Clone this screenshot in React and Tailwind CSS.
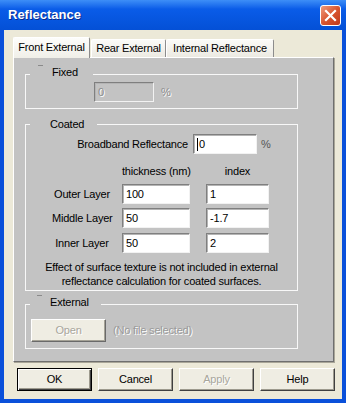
import React from "react";

function TextBox({ value, className, disabled, caret }) {
  return (
    <div
      className={`h-[20px] flex items-center pl-[3px] border border-t-[#7f7f7f] border-l-[#7f7f7f] border-r-[#f2f2f2] border-b-[#f2f2f2] shadow-[inset_1px_1px_0_#b4b4b4] ${
        disabled ? "bg-[#c3c3c3] text-[#8c8c8c] [text-shadow:1px_1px_0_#ffffff]" : "bg-white"
      } ${className}`}
    >
      {caret && <span className="w-px h-[13px] bg-black mr-px" />}
      {value}
    </div>
  );
}

function DlgButton({ children, isDefault, disabled }) {
  return (
    <button
      className={`w-[75px] h-[23px] flex items-center justify-center bg-[#efede3] ${
        isDefault
          ? "border border-black shadow-[inset_1px_1px_0_#ffffff,inset_-1px_-1px_0_#404040,inset_-2px_-2px_0_#9d9a8e]"
          : "border border-t-white border-l-white border-r-[#404040] border-b-[#404040] shadow-[inset_-1px_-1px_0_#9d9a8e]"
      } ${disabled ? "text-[#a8a69c] [text-shadow:1px_1px_0_#ffffff]" : "text-black"}`}
    >
      {children}
    </button>
  );
}

function Legend({ width, dashLeft, textCls, children }) {
  return (
    <legend className={`ml-[4px] ${width} h-[13px] leading-[13px]`}>
      <div className="flex items-center h-[13px]">
        {dashLeft && (
          <span className={`${dashLeft} w-[5px] h-px bg-[#8a8a8a] relative -top-[9px]`} />
        )}
        <span className={textCls}>{children}</span>
      </div>
    </legend>
  );
}

const layers = [
  { name: "Outer Layer", thick: "100", index: "1", top: "mt-[6px]" },
  { name: "Middle Layer", thick: "50", index: "-1.7", top: "mt-[4px]" },
  { name: "Inner Layer", thick: "50", index: "2", top: "mt-[5px]" },
];

export default function App() {
  return (
    <div className="w-[346px] h-[403px] bg-[#0a50da] flex flex-col overflow-hidden text-[11px] tracking-[-0.2px] text-black [font-family:'Liberation_Sans',Arial,sans-serif]">
      {/* Title bar */}
      <div className="h-[30px] shrink-0 flex items-center pl-[8px] pr-[5px] bg-linear-to-b from-[#3d8ef7] via-[#0a5ce8] via-30% to-[#0450d6]">
        <span className="text-white font-bold text-[13px] tracking-normal [text-shadow:1px_1px_0_#0a2a8a]">
          Reflectance
        </span>
        <button className="ml-auto w-[21px] h-[21px] rounded-[3px] border border-white bg-linear-to-br from-[#ee9a7c] via-[#d9552f] to-[#c0391a] flex items-center justify-center">
          <svg width="13" height="13" viewBox="0 0 13 13">
            <path d="M2 2L11 11M11 2L2 11" stroke="white" strokeWidth="2.2" strokeLinecap="square" />
          </svg>
        </button>
      </div>

      {/* Client area */}
      <div className="flex-1 mx-[4px] mb-[4px] bg-[#ece9d8] flex flex-col">
        {/* Tabs */}
        <div className="h-[27px] pt-[7px] pl-[9px] flex items-end">
          <div className="relative z-10 -mb-px w-[77px] h-[21px] pb-px flex items-center justify-center bg-linear-to-b from-[#fdfdfb] to-[#f0efe8] border border-b-0 border-t-white border-l-white border-r-[#8c8c8c] rounded-t-[2px]">
            Front External
          </div>
          <div className="ml-px w-[75px] h-[18px] flex items-center justify-center bg-linear-to-b from-[#fbfbf8] to-[#eceae2] border border-b-0 border-t-white border-l-white border-r-[#8c8c8c] rounded-t-[2px]">
            Rear External
          </div>
          <div className="w-[108px] h-[18px] flex items-center justify-center bg-linear-to-b from-[#fbfbf8] to-[#eceae2] border border-b-0 border-t-white border-l-white border-r-[#8c8c8c] rounded-t-[2px]">
            Internal Reflectance
          </div>
        </div>

        {/* Tab panel */}
        <div className="ml-[9px] w-[321px] h-[305px] pt-[10px] bg-[#c3c3c3] border border-t-white border-l-white border-r-[#6f6f6f] border-b-[#6f6f6f] shadow-[1px_1px_0_#a9a698]">
          {/* Fixed */}
          <fieldset className="ml-[11px] w-[273px] border border-[#f8f8f8] pb-[6px]">
            <Legend width="w-[63px]" dashLeft="ml-[8px]" textCls="ml-[9px] relative -top-[2px]">
              Fixed
            </Legend>
            <div className="mt-px ml-[68px] flex items-center">
              <TextBox className="w-[60px]" value="0" disabled />
              <span className="ml-[7px] text-[#8c8c8c] [text-shadow:1px_1px_0_#ffffff]">%</span>
            </div>
          </fieldset>

          {/* Coated */}
          <fieldset className="mt-[9px] ml-[11px] w-[273px] border border-[#f8f8f8] pb-[2px]">
            <Legend width="w-[67px]" textCls="ml-[20px]">
              Coated
            </Legend>
            <div className="mt-[3px] flex items-center">
              <span className="w-[162px] text-right whitespace-nowrap">Broadband Reflectance</span>
              <TextBox className="ml-[5px] w-[64px]" value="0" caret />
              <span className="ml-[4px] text-[#555]">%</span>
            </div>
            <div className="mt-[11px] h-[13px] leading-[13px] flex items-center">
              <span className="ml-[96px] w-[68px] text-center whitespace-nowrap">thickness (nm)</span>
              <span className="ml-[16px] w-[63px] text-center">index</span>
            </div>
            {layers.map((l) => (
              <div key={l.name} className={`${l.top} flex items-center`}>
                <span className="ml-[26px] w-[60px] text-center whitespace-nowrap">{l.name}</span>
                <TextBox className="ml-[10px] w-[68px]" value={l.thick} />
                <TextBox className="ml-[16px] w-[63px]" value={l.index} />
              </div>
            ))}
            <p className="mt-[8px] text-center leading-[13.5px]">
              Effect of surface texture is not included in external
              <br />
              reflectance calculation for coated surfaces.
            </p>
          </fieldset>

          {/* External */}
          <fieldset className="mt-[7px] ml-[11px] w-[273px] border border-[#f8f8f8] pb-[6px]">
            <Legend width="w-[71px]" dashLeft="ml-[7px]" textCls="ml-[8px] relative -top-[2px]">
              External
            </Legend>
            <div className="mt-[8px] flex items-center">
              <button className="ml-[5px] w-[75px] h-[23px] flex items-center justify-center bg-[#efede3] border border-t-white border-l-white border-r-[#6a6a6a] border-b-[#6a6a6a] shadow-[inset_-1px_-1px_0_#a5a296] text-[#a8a69c] [text-shadow:1px_1px_0_#ffffff]">
                Open
              </button>
              <span className="ml-[7px] text-[#9a9a9a] [text-shadow:1px_1px_0_#ffffff]">(No file selected)</span>
            </div>
          </fieldset>
        </div>

        {/* Buttons */}
        <div className="mt-[6px] pl-[13px] flex gap-[6px]">
          <DlgButton isDefault>OK</DlgButton>
          <DlgButton>Cancel</DlgButton>
          <DlgButton disabled>Apply</DlgButton>
          <DlgButton>Help</DlgButton>
        </div>
      </div>
    </div>
  );
}
